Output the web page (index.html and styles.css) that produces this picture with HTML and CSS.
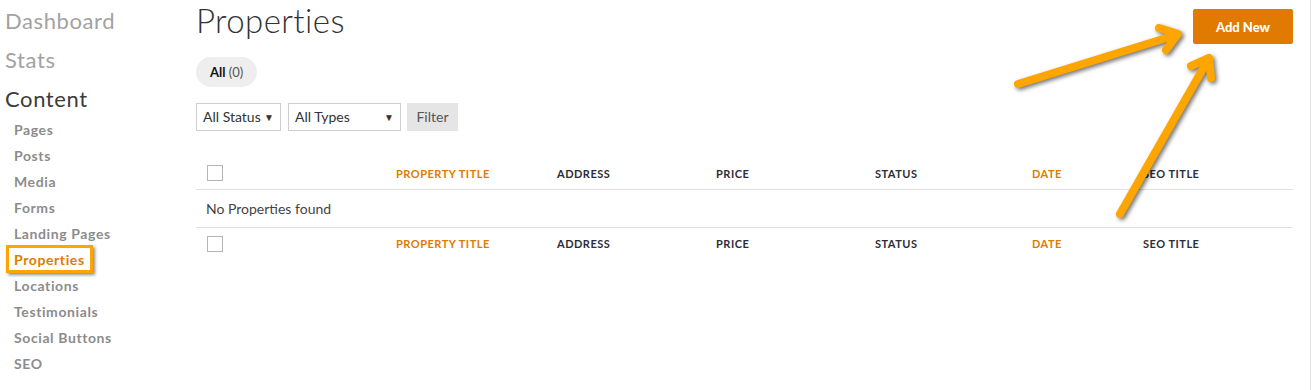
FILE: index.html
```html
<!DOCTYPE html>
<html lang="en">
<head>
    <meta charset="UTF-8">
    <title>Properties</title>
    <link rel="stylesheet" href="styles.css">
</head>
<body class="cms-body">
    <div class="cms-layout">
        <!-- Sidebar -->
        <nav class="cms-sidebar">
            <a class="cms-nav-top" href="#">Dashboard</a>
            <a class="cms-nav-top" href="#">Stats</a>
            <a class="cms-nav-top cms-nav-current" href="#">Content</a>
            <ul class="cms-subnav">
                <li><a href="#">Pages</a></li>
                <li><a href="#">Posts</a></li>
                <li><a href="#">Media</a></li>
                <li><a href="#">Forms</a></li>
                <li><a href="#">Landing Pages</a></li>
                <li class="cms-subnav-active"><a href="#">Properties</a></li>
                <li><a href="#">Locations</a></li>
                <li><a href="#">Testimonials</a></li>
                <li><a href="#">Social Buttons</a></li>
                <li><a href="#">SEO</a></li>
            </ul>
        </nav>

        <!-- Main content -->
        <main class="cms-main">
            <div class="cms-header">
                <h1 class="cms-title">Properties</h1>
                <button class="cms-add-btn">Add New</button>
            </div>

            <div class="cms-views">
                <span class="cms-pill"><b>All</b> (0)</span>
            </div>

            <div class="cms-filters">
                <div class="cms-select cms-select-status">All Status <span class="cms-caret">&#9660;</span></div>
                <div class="cms-select cms-select-types">All Types <span class="cms-caret">&#9660;</span></div>
                <button class="cms-filter-btn">Filter</button>
            </div>

            <div class="cms-table">
                <div class="cms-row cms-row-head">
                    <div class="cms-cell"><span class="cms-check"></span></div>
                    <div class="cms-cell cms-sort">Property Title</div>
                    <div class="cms-cell">Address</div>
                    <div class="cms-cell">Price</div>
                    <div class="cms-cell">Status</div>
                    <div class="cms-cell cms-sort">Date</div>
                    <div class="cms-cell">SEO Title</div>
                </div>
                <div class="cms-row cms-row-empty">
                    <div class="cms-cell cms-empty">No Properties found</div>
                </div>
                <div class="cms-row cms-row-head cms-row-foot">
                    <div class="cms-cell"><span class="cms-check"></span></div>
                    <div class="cms-cell cms-sort">Property Title</div>
                    <div class="cms-cell">Address</div>
                    <div class="cms-cell">Price</div>
                    <div class="cms-cell">Status</div>
                    <div class="cms-cell cms-sort">Date</div>
                    <div class="cms-cell">SEO Title</div>
                </div>
            </div>
        </main>
    </div>

    <!-- annotation arrows drawn over the page -->
    <svg class="cms-arrows" width="1314" height="390" viewBox="0 0 1314 390">
        <g fill="none" stroke="#ffa500" stroke-width="8" stroke-linecap="round" stroke-linejoin="round">
            <line x1="1018" y1="84" x2="1176" y2="35"/>
            <polyline points="1159,28 1178,34 1166,50"/>
            <line x1="1120" y1="214" x2="1208" y2="60"/>
            <polyline points="1191,66 1209,58 1211,78"/>
        </g>
    </svg>
</body>
</html>
```

FILE: styles.css
```css
/* Base */
.cms-body {
    margin: 0;
    font-family: Lato, "Open Sans", sans-serif;
    background: #fff;
    color: #333;
    height: 390px;
    overflow: hidden;
    position: relative;
}

.cms-layout {
    display: flex;
    height: 390px;
    border-right: 1px solid #e2e2e2;
    margin-right: 3px;
}

/* Sidebar */
.cms-sidebar {
    width: 191px;
    padding: 1px 0 0 5px;
    box-sizing: border-box;
    flex-shrink: 0;
}

.cms-nav-top {
    display: block;
    font-size: 22px;
    letter-spacing: 0.6px;
    line-height: 39px;
    color: #a2a2a2;
    text-decoration: none;
}

.cms-nav-current {
    color: #3c3c3c;
}

.cms-subnav {
    list-style: none;
    margin: -2px 0 0 0;
    padding: 0;
}

.cms-subnav li {
    height: 26px;
    line-height: 26px;
    padding-left: 9px;
}

.cms-subnav a {
    font-size: 14px;
    font-weight: bold;
    letter-spacing: 0.6px;
    color: #8c8c8c;
    text-decoration: none;
}

.cms-subnav-active {
    position: relative;
}

.cms-subnav-active a {
    color: #e07a00;
}

/* highlight box around the active item */
.cms-subnav-active::before {
    content: "";
    position: absolute;
    left: 1px;
    top: -1px;
    width: 81px;
    height: 22px;
    border: 3px solid #ffa500;
    box-shadow: 2px 2px 3px rgba(0, 0, 0, 0.45);
}

/* Main */
.cms-main {
    flex: 1;
    padding: 0 17px 0 5px;
}

.cms-header {
    display: flex;
    justify-content: space-between;
    align-items: flex-start;
}

.cms-title {
    margin: 0;
    font-size: 33px;
    font-weight: 300;
    letter-spacing: 0.4px;
    line-height: 40px;
    color: #333;
}

.cms-add-btn {
    margin-top: 9px;
    width: 100px;
    height: 35px;
    border: none;
    border-radius: 2px;
    background: #e07a00;
    color: #fff;
    font-family: inherit;
    font-size: 13px;
    font-weight: 900;
}

.cms-views {
    margin-top: 13px;
}

.cms-pill {
    display: inline-block;
    height: 30px;
    line-height: 30px;
    padding: 0 14px;
    border-radius: 15px;
    background: #eeeeee;
    font-size: 13px;
    color: #555;
}

.cms-pill b {
    color: #111;
}

.cms-filters {
    display: flex;
    gap: 7px;
    margin-top: 16px;
}

.cms-select {
    height: 28px;
    box-sizing: border-box;
    border: 1px solid #cfcfcf;
    background: #fff;
    font-size: 14px;
    line-height: 26px;
    padding: 0 6px;
    display: flex;
    justify-content: space-between;
    color: #333;
}

.cms-select-status {
    width: 85px;
}

.cms-select-types {
    width: 113px;
}

.cms-caret {
    font-size: 10px;
}

.cms-filter-btn {
    height: 28px;
    width: 51px;
    border: none;
    background: #e5e5e5;
    color: #555;
    font-family: inherit;
    font-size: 14px;
    margin-left: -1px;
    padding-bottom: 2px;
}

/* Table */
.cms-table {
    margin-top: 29px;
}

.cms-row {
    display: grid;
    grid-template-columns: 200px 161px 159px 159px 157px 111px 1fr;
    align-items: center;
}

.cms-row-head {
    height: 30px;
    box-sizing: border-box;
    padding-bottom: 3px;
    border-bottom: 1px solid #e0e0e0;
    font-size: 11px;
    font-weight: bold;
    text-transform: uppercase;
    letter-spacing: 0.5px;
    color: #2d2d38;
}

.cms-row-foot {
    border-bottom: none;
    height: 33px;
    padding-bottom: 0;
    padding-top: 0;
    align-items: start;
    padding-top: 9px;
}

.cms-row-foot .cms-check {
    margin-top: -1px;
}

.cms-row-empty {
    height: 37px;
    border-bottom: 1px solid #e0e0e0;
}

.cms-empty {
    grid-column: 1 / -1;
    padding-left: 10px;
    font-size: 14px;
    color: #444;
}

.cms-sort {
    color: #e07a00;
}

.cms-check {
    display: block;
    width: 14px;
    height: 14px;
    margin-left: 11px;
    border: 1px solid #b5b5b5;
}

/* Arrows overlay */
.cms-arrows {
    position: absolute;
    left: 0;
    top: 0;
    pointer-events: none;
    filter: drop-shadow(2px 2px 2px rgba(0, 0, 0, 0.55));
}
```
